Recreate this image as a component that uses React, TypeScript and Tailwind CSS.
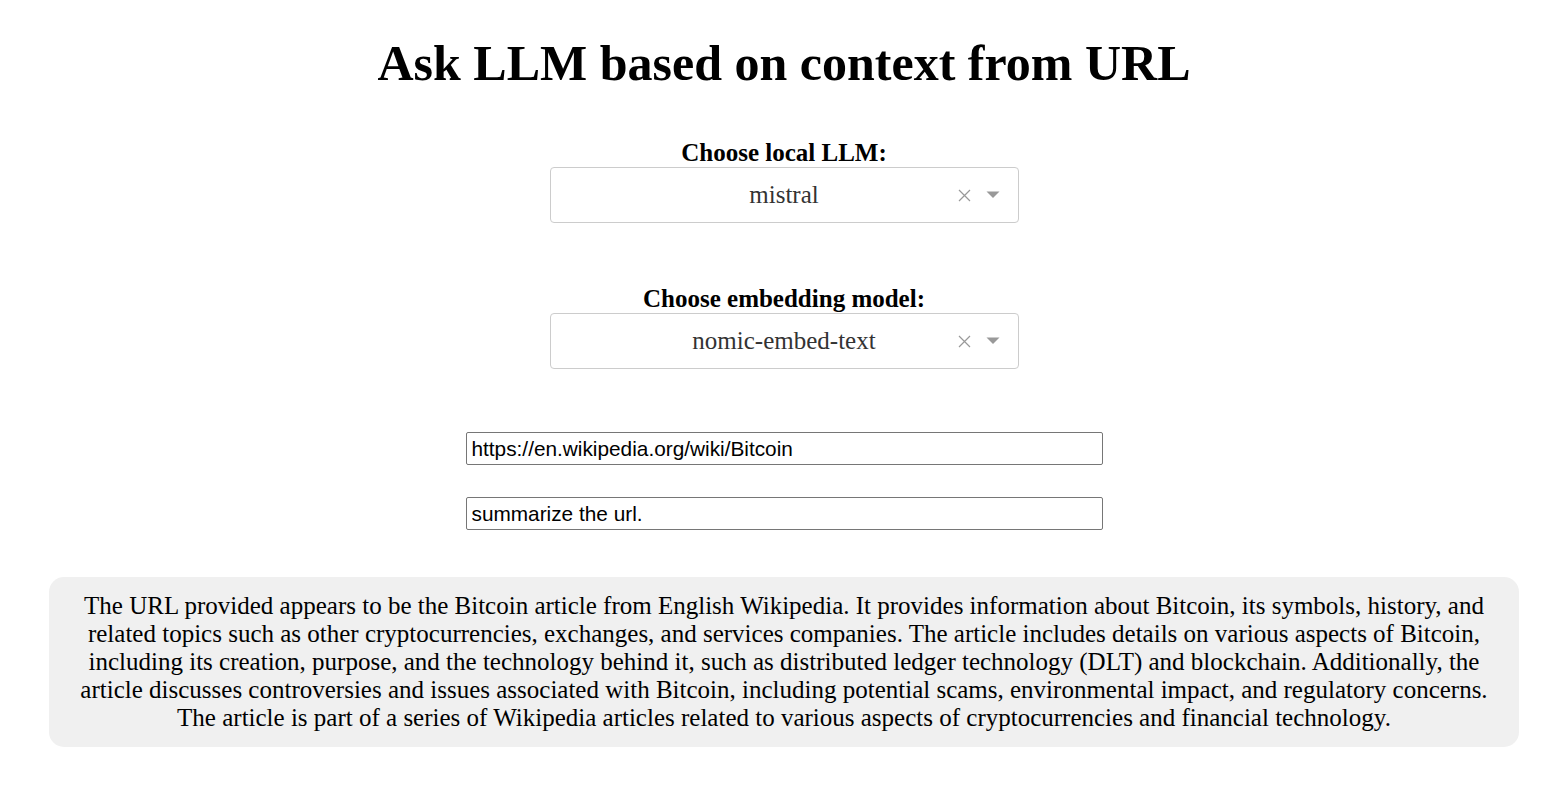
import React from "react";

const serif = "font-['Liberation_Serif','Times_New_Roman',serif]";

function Dropdown({ value }: { value: string }) {
  return (
    <div className="flex h-[56px] w-[469px] items-center rounded-[4px] border border-[#cccccc] bg-white">
      <div className={`flex-1 pl-[66px] text-center text-[25px] text-[#333333] ${serif}`}>{value}</div>
      <div className="flex w-[26px] items-center justify-center">
        <svg width="13" height="13" viewBox="0 0 13 13">
          <path d="M1 1 L12 12 M12 1 L1 12" stroke="#999999" strokeWidth="1.2" />
        </svg>
      </div>
      <div className="flex w-[40px] items-center justify-center pr-[10px]">
        <svg width="14" height="8" viewBox="0 0 14 8">
          <path d="M0.5 0.5 L13.5 0.5 L7 7 Z" fill="#999999" />
        </svg>
      </div>
    </div>
  );
}

export default function App() {
  const answer =
    "The URL provided appears to be the Bitcoin article from English Wikipedia. It provides information about Bitcoin, its symbols, history, and related topics such as other cryptocurrencies, exchanges, and services companies. The article includes details on various aspects of Bitcoin, including its creation, purpose, and the technology behind it, such as distributed ledger technology (DLT) and blockchain. Additionally, the article discusses controversies and issues associated with Bitcoin, including potential scams, environmental impact, and regulatory concerns. The article is part of a series of Wikipedia articles related to various aspects of cryptocurrencies and financial technology.";

  return (
    <div className={`min-h-screen bg-white text-black ${serif}`}>
      <div className="flex flex-col items-center pl-[11px]">
        <h1 className="pt-[35px] text-center text-[50px] font-bold leading-[57px]">
          Ask LLM based on context from URL
        </h1>

        <label className="mt-[47px] text-[25px] font-bold leading-[28px]">Choose local LLM:</label>
        <Dropdown value="mistral" />

        <label className="mt-[62px] text-[25px] font-bold leading-[28px]">Choose embedding model:</label>
        <Dropdown value="nomic-embed-text" />

        <input
          className="mt-[63px] h-[33px] w-[637px] rounded-[2px] border border-[#767676] px-[5px] font-['Liberation_Sans',Arial,sans-serif] text-[20.8px] text-black outline-none"
          defaultValue="https://en.wikipedia.org/wiki/Bitcoin"
        />
        <input
          className="mt-[32px] h-[33px] w-[637px] rounded-[2px] border border-[#767676] px-[5px] font-['Liberation_Sans',Arial,sans-serif] text-[20.8px] text-black outline-none"
          defaultValue="summarize the url."
        />
      </div>

      <div className="ml-[49px] mr-[38px] mt-[47px] rounded-[15px] bg-[#f0f0f0] px-[20px] py-[15px] text-center text-[25px] leading-[28px]">
        {answer}
      </div>
    </div>
  );
}
